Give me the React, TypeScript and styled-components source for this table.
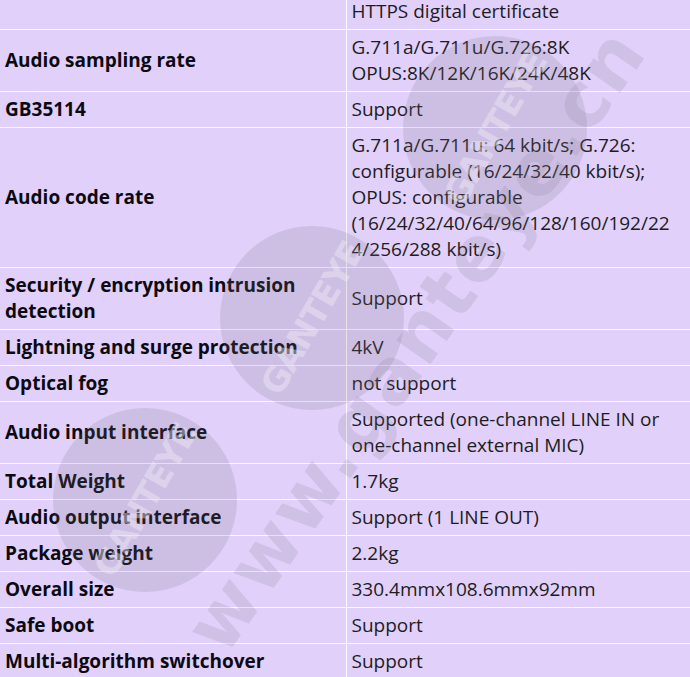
import React from "react";
import styled, { createGlobalStyle } from "styled-components";

const GlobalStyle = createGlobalStyle`
  html, body {
    margin: 0;
    padding: 0;
    background: #e0d0fa;
    overflow: hidden;
  }
`;

const Page = styled.div`
  position: relative;
  width: 690px;
  height: 677px;
  overflow: hidden;
  font-family: "Open Sans", "Noto Sans", sans-serif;
`;

const SpecTable = styled.table`
  width: 690px;
  margin-top: -6px;
  border-collapse: collapse;
  table-layout: fixed;
  background: #e0d0fa;
  font-size: 19px;
  line-height: 26px;
`;

const Row = styled.tr`
  border-bottom: 1px solid #fdfbff;
`;

const Label = styled.td`
  box-sizing: border-box;
  width: 346px;
  padding: 4px 5px 5px;
  border-right: 1px solid #fdfbff;
  font-weight: 700;
  color: #0c0a10;
  vertical-align: middle;
`;

const Value = styled.td`
  box-sizing: border-box;
  padding: 4px 5px 5px;
  color: #1e1c22;
  vertical-align: middle;
  overflow-wrap: break-word;
`;

const Overlay = styled.div`
  position: absolute;
  inset: 0;
  pointer-events: none;
`;

const Seal = styled.div<{ $x: number; $y: number }>`
  position: absolute;
  left: ${(p) => p.$x - 92}px;
  top: ${(p) => p.$y - 92}px;
  width: 184px;
  height: 184px;
  border-radius: 50%;
  background: rgba(120, 118, 125, 0.18);
  display: flex;
  align-items: center;
  justify-content: center;
`;

const SealText = styled.span`
  transform: rotate(-60deg);
  font-family: "DejaVu Sans", sans-serif;
  font-weight: 700;
  font-size: 34px;
  letter-spacing: -1px;
  color: rgba(240, 236, 248, 0.45);
`;

const Site = styled.div`
  position: absolute;
  left: 415px;
  top: 340px;
  transform: translate(-50%, -50%) rotate(-55deg);
  font-family: "DejaVu Sans", sans-serif;
  font-weight: 700;
  font-size: 76px;
  letter-spacing: 2px;
  white-space: nowrap;
  color: rgba(120, 112, 130, 0.16);
`;

const rows: { label: string; value: React.ReactNode }[] = [
  { label: "", value: "HTTPS digital certificate" },
  {
    label: "Audio sampling rate",
    value: (
      <>
        G.711a/G.711u/G.726:8K
        <br />
        OPUS:8K/12K/16K/24K/48K
      </>
    ),
  },
  { label: "GB35114", value: "Support" },
  {
    label: "Audio code rate",
    value: (
      <>
        G.711a/G.711u: 64 kbit/s; G.726: configurable (16/24/32/40 kbit/s);
        OPUS: configurable (16/24/32/40/64/96/128/160/192/22
        <wbr />
        4/256/288 kbit/s)
      </>
    ),
  },
  { label: "Security / encryption intrusion detection", value: "Support" },
  { label: "Lightning and surge protection", value: "4kV" },
  { label: "Optical fog", value: "not support" },
  {
    label: "Audio input interface",
    value: "Supported (one-channel LINE IN or one-channel external MIC)",
  },
  { label: "Total Weight", value: "1.7kg" },
  { label: "Audio output interface", value: "Support (1 LINE OUT)" },
  { label: "Package weight", value: "2.2kg" },
  { label: "Overall size", value: "330.4mmx108.6mmx92mm" },
  { label: "Safe boot", value: "Support" },
  { label: "Multi-algorithm switchover", value: "Support" },
];

const seals = [
  { x: 495, y: 128 },
  { x: 312, y: 318 },
  { x: 145, y: 500 },
];

export default function App() {
  return (
    <Page>
      <GlobalStyle />
      <SpecTable>
        <tbody>
          {rows.map((r, i) => (
            <Row key={i}>
              <Label>{r.label}</Label>
              <Value>{r.value}</Value>
            </Row>
          ))}
        </tbody>
      </SpecTable>
      <Overlay>
        {seals.map((s, i) => (
          <Seal key={i} $x={s.x} $y={s.y}>
            <SealText>GANTEYE</SealText>
          </Seal>
        ))}
        <Site>www.ganteye.cn</Site>
      </Overlay>
    </Page>
  );
}
